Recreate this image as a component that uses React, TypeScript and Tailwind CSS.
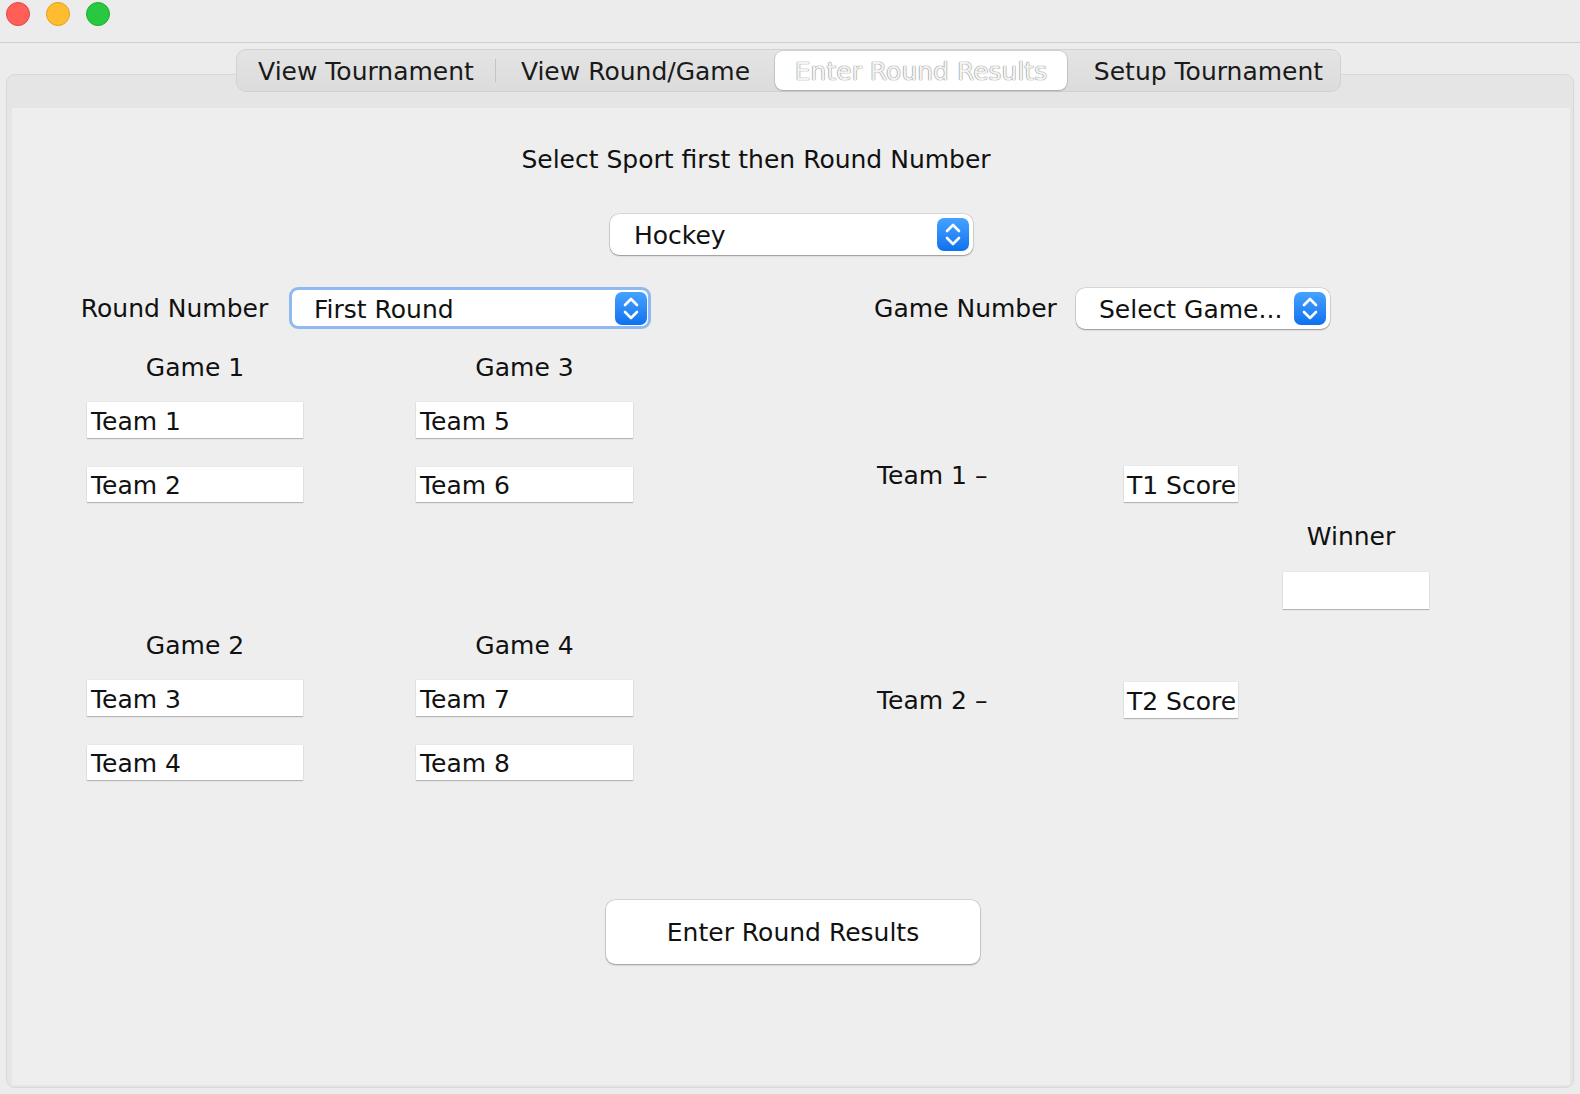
import React from "react";

const font = { fontFamily: '"DejaVu Sans", "Liberation Sans", sans-serif' };

function Chevrons() {
  return (
    <svg width="32" height="33" viewBox="0 0 32 33" fill="none">
      <path d="M10 13 L16 7 L22 13" stroke="white" strokeWidth="2.6" strokeLinecap="round" strokeLinejoin="round" />
      <path d="M10 20 L16 26 L22 20" stroke="white" strokeWidth="2.6" strokeLinecap="round" strokeLinejoin="round" />
    </svg>
  );
}

function Combo({ text, className, pl, focused }: { text: string; className: string; pl: string; focused?: boolean }) {
  return (
    <div
      className={
        "flex items-center bg-white rounded-[9px] " +
        (focused
          ? "border-[3px] border-[#8fbaf1] "
          : "shadow-[0_0_0_0.5px_rgba(0,0,0,0.18),0_1px_1.5px_rgba(0,0,0,0.3)] ") +
        className
      }
    >
      <span className={"flex-1 text-[25px] leading-none pt-[2px] text-[#111] whitespace-nowrap " + pl}>{text}</span>
      <div className={"w-[32px] h-[33px] rounded-[7px] bg-linear-to-b from-[#46a2ff] to-[#0b72ef] flex items-center justify-center " + (focused ? "mr-[1px]" : "mr-[4px]")}>
        <Chevrons />
      </div>
    </div>
  );
}

function Field({ text, className }: { text?: string; className: string }) {
  return (
    <div
      className={
        "bg-white flex items-center pt-[2px] overflow-hidden whitespace-nowrap text-[25px] leading-none text-[#111] shadow-[0_1px_1px_rgba(0,0,0,0.22),0_0_0_0.5px_rgba(0,0,0,0.05)] " +
        className
      }
    >
      {text}
    </div>
  );
}

function Label({ text, className }: { text: string; className: string }) {
  return (
    <div className={"text-[25px] leading-[32px] h-[30px] text-[#111] whitespace-nowrap flex justify-center " + className}>
      {text}
    </div>
  );
}

export default function App() {
  return (
    <div className="w-[1580px] h-[1094px] bg-[#ececec] flex flex-col overflow-hidden" style={font}>
      {/* title bar */}
      <div className="h-[43px] shrink-0 border-b border-[#d0d0d0] flex items-start pt-[2px] pl-[6px] gap-[16px]">
        <div className="w-[24px] h-[24px] rounded-full bg-[#ff5f57] border border-[#e2463f]" />
        <div className="w-[24px] h-[24px] rounded-full bg-[#febc2e] border border-[#dfa123]" />
        <div className="w-[24px] h-[24px] rounded-full bg-[#28c840] border border-[#1dad2b]" />
      </div>

      <div className="flex flex-col px-[6px]">
        {/* tab bar */}
        <div className="relative z-10 ml-[230px] mt-[6px] w-[1105px] h-[43px] rounded-[10px] border border-[#d2d2d2] bg-linear-to-b from-[#e4e4e4] to-[#dcdcdc] flex items-stretch text-[25px] text-[#1a1a1a]">
          <div className="w-[258px] pt-[2px] flex items-center justify-center whitespace-nowrap">View Tournament</div>
          <div className="w-px my-[9px] bg-[#c4c4c4]" />
          <div className="w-[279px] pt-[2px] flex items-center justify-center whitespace-nowrap">View Round/Game</div>
          <div className="w-[292px] my-[1px] pt-[2px] rounded-[8px] bg-white shadow-[0_0_0_0.5px_rgba(0,0,0,0.15),0_1px_2px_rgba(0,0,0,0.2)] flex items-center justify-center whitespace-nowrap text-[#f3f3f3] [text-shadow:0_0_1px_#6f6f6f,0_0_1px_#8f8f8f]">
            Enter Round Results
          </div>
          <div className="flex-1 pt-[2px] pl-[10px] flex items-center justify-center whitespace-nowrap">Setup Tournament</div>
        </div>

        {/* panel */}
        <div className="-mt-[18px] h-[1014px] rounded-[9px] border border-[#d8d8d8] bg-[#e5e5e5] flex flex-col">
          <div className="h-[33px] shrink-0" />
          <div className="flex-1 ml-[5px] mr-[3px] mb-[2px] bg-[#eeeeee] flex flex-col">
            {/* title */}
            <Label text="Select Sport first then Round Number" className="mt-[36px] ml-[510px] w-[468px]" />
            {/* hockey */}
            <Combo text="Hockey" className="mt-[40px] ml-[598px] w-[363px] h-[41px]" pl="pl-[24px]" />
            {/* round / game number row */}
            <div className="mt-[32px] h-[42px] flex items-center">
              <Label text="Round Number" className="ml-[69px] w-[187px]" />
              <Combo text="First Round" focused className="ml-[21px] w-[362px] h-[42px]" pl="pl-[22px]" />
              <Label text="Game Number" className="ml-[226px] w-[177px]" />
              <Combo text="Select Game..." className="ml-[22px] w-[254px] h-[41px]" pl="pl-[23px]" />
            </div>

            {/* lower area */}
            <div className="flex items-start">
              {/* game columns */}
              <div className="ml-[75px] flex gap-[113px]">
                <div className="flex flex-col w-[216px]">
                  <Label text="Game 1" className="mt-[23px]" />
                  <Field text="Team 1" className="mt-[20px] h-[36px] pl-[4px]" />
                  <Field text="Team 2" className="mt-[29px] h-[35px] pl-[4px]" />
                  <Label text="Game 2" className="mt-[128px]" />
                  <Field text="Team 3" className="mt-[20px] h-[36px] pl-[4px]" />
                  <Field text="Team 4" className="mt-[29px] h-[35px] pl-[4px]" />
                </div>
                <div className="flex flex-col w-[217px]">
                  <Label text="Game 3" className="mt-[23px]" />
                  <Field text="Team 5" className="mt-[20px] h-[36px] pl-[4px]" />
                  <Field text="Team 6" className="mt-[29px] h-[35px] pl-[4px]" />
                  <Label text="Game 4" className="mt-[128px]" />
                  <Field text="Team 7" className="mt-[20px] h-[36px] pl-[4px]" />
                  <Field text="Team 8" className="mt-[29px] h-[35px] pl-[4px]" />
                </div>
              </div>

              {/* score area */}
              <div className="ml-[244px] flex flex-col">
                <div className="mt-[131px] flex items-start">
                  <div className="w-[247px] text-[25px] leading-[32px] text-[#111] whitespace-nowrap">Team 1 –</div>
                  <Field text="T1 Score" className="mt-[6px] w-[114px] h-[36px] pl-[3px]" />
                </div>
                <Label text="Winner" className="mt-[19px] ml-[406px] w-[136px]" />
                <Field className="mt-[21px] ml-[406px] w-[146px] h-[37px] shadow-[0_0_0_1px_rgba(0,0,0,0.08),0_1px_1px_rgba(0,0,0,0.2)]" />
                <div className="mt-[73px] h-[36px] flex items-center">
                  <div className="w-[247px] text-[25px] leading-[32px] pt-[2px] text-[#111] whitespace-nowrap">Team 2 –</div>
                  <Field text="T2 Score" className="w-[114px] h-[36px] pl-[3px]" />
                </div>
              </div>
            </div>

            {/* button */}
            <div className="mt-[120px] ml-[594px] w-[374px] h-[64px] pt-[2px] rounded-[9px] bg-white shadow-[0_0_0_0.5px_rgba(0,0,0,0.18),0_1px_2px_rgba(0,0,0,0.3)] flex items-center justify-center text-[25px] text-[#111] whitespace-nowrap">
              Enter Round Results
            </div>
          </div>
        </div>
      </div>
    </div>
  );
}
